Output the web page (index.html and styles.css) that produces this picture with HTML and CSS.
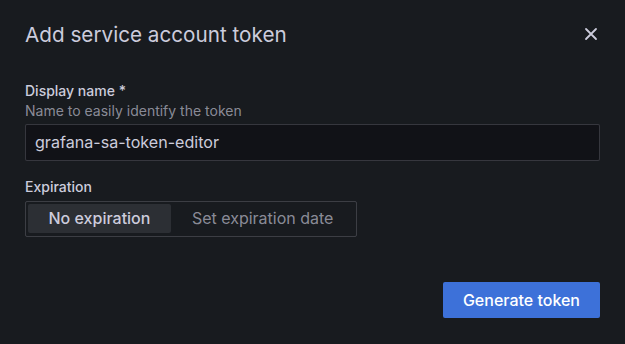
FILE: index.html
```html
<!DOCTYPE html>
<html>
<head>
<meta charset="utf-8">
<link rel="stylesheet" href="styles.css">
</head>
<body>
<div class="modal">
  <div class="header">
    <h2 class="title">Add service account token</h2>
    <button class="close" aria-label="Close">
      <svg width="16" height="16" viewBox="0 0 16 16"><path d="M3 3 L13 13 M13 3 L3 13" stroke="#ccccdc" stroke-width="1.8" stroke-linecap="round"/></svg>
    </button>
  </div>
  <div class="field">
    <div class="label">Display name *</div>
    <div class="desc">Name to easily identify the token</div>
    <div class="input">grafana-sa-token-editor</div>
  </div>
  <div class="field field2">
    <div class="label">Expiration</div>
    <div class="radio">
      <div class="opt active">No expiration</div>
      <div class="opt">Set expiration date</div>
    </div>
  </div>
  <div class="footer">
    <button class="primary">Generate token</button>
  </div>
</div>
</body>
</html>
```
FILE: styles.css
```css
html, body { margin: 0; padding: 0; background: #181b1f; }
body { font-family: Inter, "Noto Sans", sans-serif; color: #ccccdc; width: 625px; height: 344px; overflow: hidden; }
.modal { padding: 18px 25px 0 25px; }
.header { display: flex; justify-content: space-between; align-items: center; height: 32px; }
.title { margin: 0; font-size: 20.7px; font-weight: 400; letter-spacing: 0; color: #ccccdc; }
.close { background: none; border: 0; padding: 0; margin-right: 1px; display: flex; }
.field { margin-top: 32px; }
.field2 { margin-top: 17px; }
.label { font-size: 14px; font-weight: 500; line-height: 18px; }
.desc { font-size: 14px; line-height: 18px; color: rgba(204,204,220,0.65); margin-top: 2px; }
.input { margin-top: 4px; height: 35px; border: 1px solid rgba(204,204,220,0.2); border-radius: 2px; background: #111217; font-size: 16.1px; line-height: 35px; padding: 0 9px; }
.radio { margin-top: 5px; display: inline-flex; border: 1px solid rgba(204,204,220,0.2); border-radius: 2px; padding: 2px 2px 3px 2px; height: 29px; }
.opt { font-size: 16px; line-height: 29px; padding: 0 21px; color: rgba(204,204,220,0.65); border-radius: 2px; }
.opt.active { background: #2c2f34; color: #ccccdc; font-weight: 500; padding: 0 20.5px; }
.footer { display: flex; justify-content: flex-end; margin-top: 45px; }
.primary { background: #3d71d9; color: #fff; border: 0; border-radius: 2px; height: 36px; padding: 0 20px; font-family: inherit; font-size: 16px; font-weight: 500; }
```
